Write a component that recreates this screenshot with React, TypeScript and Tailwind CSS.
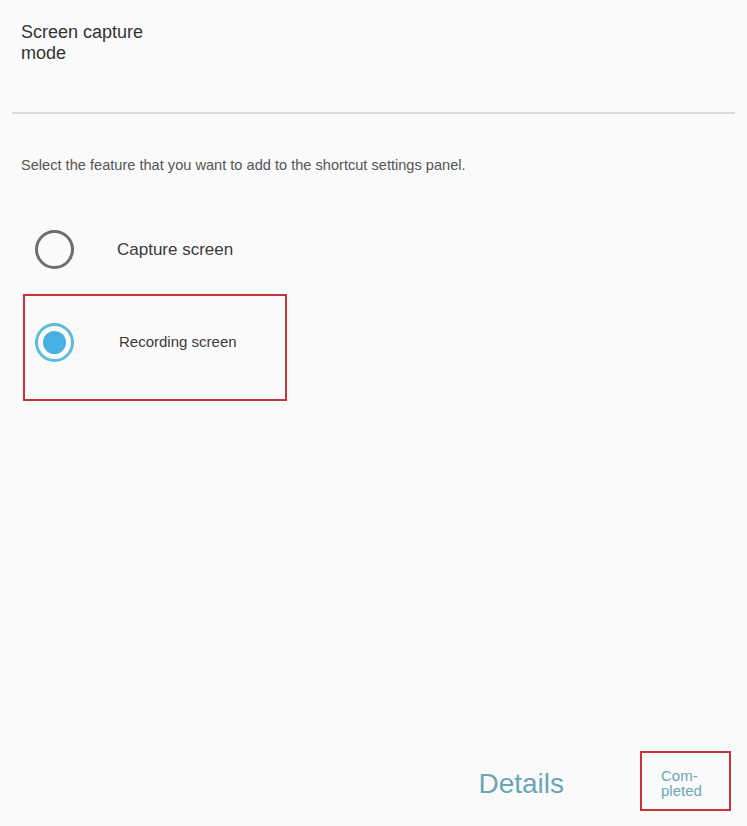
import React from "react";

const font = { fontFamily: '"Liberation Sans", Arial, sans-serif' };

export default function App() {
  return (
    <div
      className="w-full h-[826px] bg-[#fafafa] flex flex-col overflow-hidden font-['Liberation_Sans',Arial,sans-serif]"
      style={font}
    >
      {/* header */}
      <div className="pt-[22px] pl-[21px] text-[18px] leading-[21px] text-[#333333]">
        Screen capture
        <br />
        mode
      </div>
      <div className="mt-[48px] mx-[12px] h-[2px] bg-[#dadada]" />

      <p className="mt-[42px] pl-[21px] text-[14.6px] leading-[18px] text-[#555555]">
        Select the feature that you want to add to the shortcut settings panel.
      </p>

      {/* options */}
      <div className="mt-[56px] flex items-center pl-[35px]">
        <div className="w-[39px] h-[39px] rounded-full border-[3px] border-[#6e6e6e]" />
        <span className="ml-[43px] text-[17px] leading-[20px] text-[#3a3a3a]">Capture screen</span>
      </div>

      <div className="mt-[25px] ml-[23px] w-[264px] h-[107px] border-2 border-[#c8333a] pt-[27px] pl-[10px]">
        <div className="flex items-center">
          <div className="w-[39px] h-[39px] rounded-full border-[3px] border-[#5dbdd6] flex items-center justify-center">
            <div className="w-[23px] h-[23px] rounded-full bg-[#45b2e2]" />
          </div>
          <span className="ml-[45px] -mt-[1px] text-[15px] leading-[18px] text-[#3a3a3a]">Recording screen</span>
        </div>
      </div>

      <div className="flex-1" />

      {/* bottom buttons */}
      <div className="flex justify-end items-start pr-[16px] pb-[15px]">
        <span className="mt-[17px] mr-[76px] text-[28px] leading-[32px] text-[#6aa6b5]">Details</span>
        <div className="w-[91px] h-[60px] border-2 border-[#c8333a] pt-[15px] pl-[19px] text-[15px] leading-[15px] text-[#6aa6b5]">
          Com-
          <br />
          pleted
        </div>
      </div>
    </div>
  );
}
